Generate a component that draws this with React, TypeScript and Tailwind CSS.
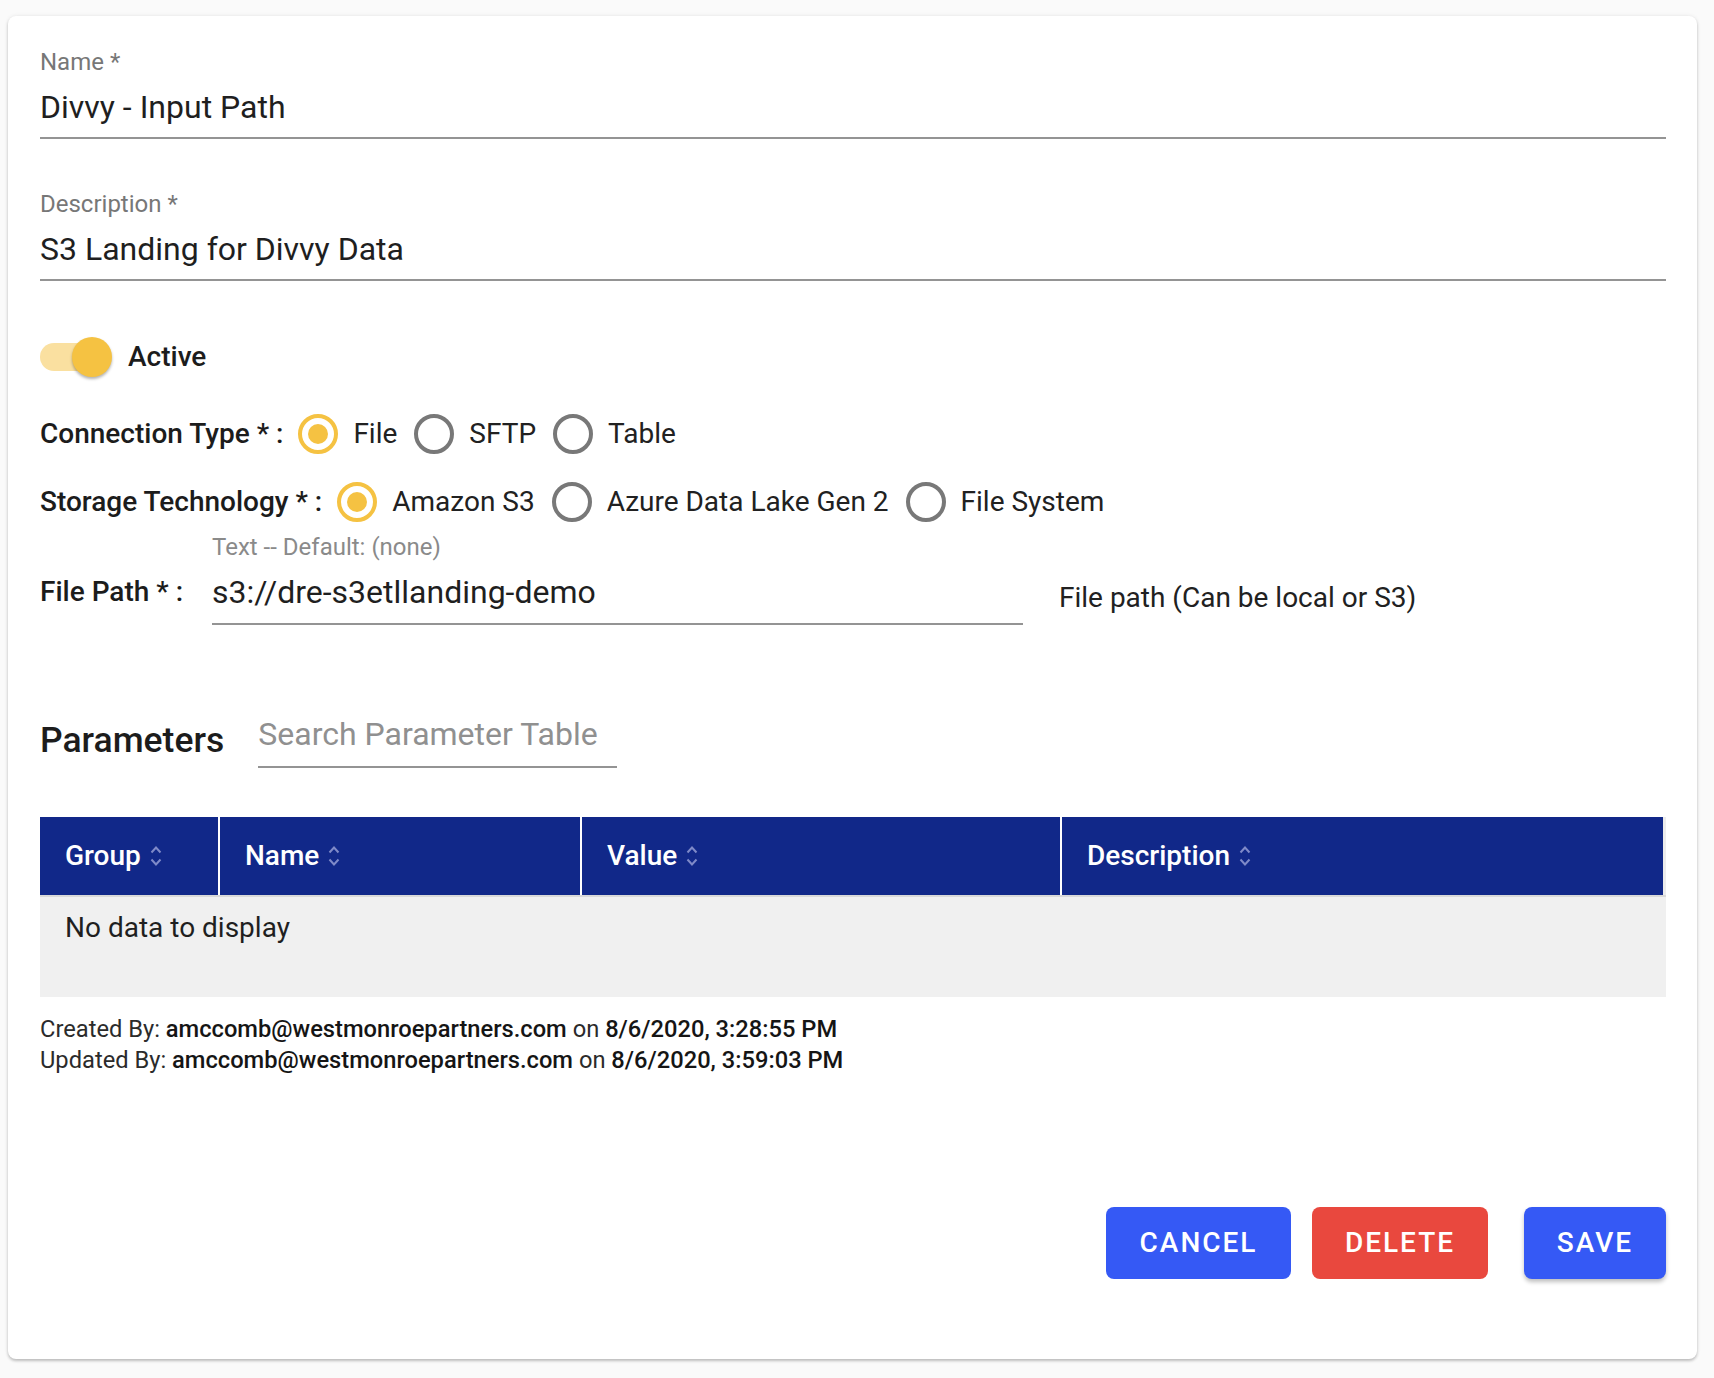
import React from 'react';

const Radio = ({ checked }: { checked?: boolean }) =>
  checked ? (
    <span className="flex h-10 w-10 shrink-0 items-center justify-center rounded-full border-4 border-[#f5c242]">
      <span className="h-5 w-5 rounded-full bg-[#f5c242]" />
    </span>
  ) : (
    <span className="h-10 w-10 shrink-0 rounded-full border-4 border-[#787878]" />
  );

const RadioGroup = ({ label, options, selected }: { label: string; options: string[]; selected: string }) => (
  <div className="flex h-10 items-center">
    <span className="mr-[15px] text-[28px] font-medium leading-[36px] text-[#1c1c1c]">{label}</span>
    <div className="flex items-center gap-[17px]">
      {options.map((o) => (
        <label key={o} className="flex items-center gap-[15px]">
          <Radio checked={o === selected} />
          <span className="text-[28px] leading-[36px] text-[#212121]">{o}</span>
        </label>
      ))}
    </div>
  </div>
);

const SortIcon = () => (
  <svg width="12" height="22" viewBox="0 0 12 22" fill="none" stroke="#7f8ac8" strokeWidth="2">
    <path d="M1.5 7.5 L6 2.5 L10.5 7.5" />
    <path d="M1.5 14.5 L6 19.5 L10.5 14.5" />
  </svg>
);

const columns = [
  { title: 'Group', width: 'w-[180px]' },
  { title: 'Name', width: 'w-[362px]' },
  { title: 'Value', width: 'w-[480px]' },
];

export default function App() {
  return (
    <div className="min-h-screen bg-[#fafafa] pt-4 pl-2 pr-[17px] pb-[21px] font-['Roboto',sans-serif]">
      <div className="rounded-lg bg-white pt-8 pl-8 pr-[31px] pb-[80px] shadow-[0_2px_3px_rgba(0,0,0,0.22),0_0_4px_rgba(0,0,0,0.08)]">
        {/* name */}
        <div>
          <div className="text-[24px] leading-[28px] text-[#777]">Name *</div>
          <div className="mt-[11px] border-b-2 border-[#949494] pb-[10px] text-[32px] leading-[40px] text-[#1f1f1f]">
            Divvy - Input Path
          </div>
        </div>

        {/* description */}
        <div className="mt-[51px]">
          <div className="text-[24px] leading-[28px] text-[#777]">Description *</div>
          <div className="mt-[11px] border-b-2 border-[#949494] pb-[10px] text-[32px] leading-[40px] text-[#1f1f1f]">
            S3 Landing for Divvy Data
          </div>
        </div>

        {/* active switch */}
        <div className="mt-[56px] flex h-10 items-center gap-4">
          <span className="relative h-10 w-[72px] shrink-0">
            <span className="absolute left-0 top-[6px] h-7 w-[68px] rounded-full bg-[#fae0a0]" />
            <span className="absolute right-0 top-0 h-10 w-10 rounded-full bg-[#f5c242] shadow-[0_2px_3px_rgba(0,0,0,0.3)]" />
          </span>
          <span className="text-[28px] font-medium leading-[36px] text-[#1c1c1c]">Active</span>
        </div>

        <div className="mt-[37px]">
          <RadioGroup label="Connection Type * :" options={['File', 'SFTP', 'Table']} selected="File" />
        </div>
        <div className="mt-7">
          <RadioGroup
            label="Storage Technology * :"
            options={['Amazon S3', 'Azure Data Lake Gen 2', 'File System']}
            selected="Amazon S3"
          />
        </div>

        {/* file path */}
        <div className="mt-[11px] flex items-start">
          <div className="w-[172px] shrink-0 pt-[41px] text-[28px] font-medium leading-[36px] text-[#1c1c1c]">
            File Path * :
          </div>
          <div className="w-[811px] shrink-0">
            <div className="text-[24px] leading-[28px] text-[#8a8a8a]">Text -- Default: (none)</div>
            <div className="mt-[11px] border-b-2 border-[#949494] pb-[11px] text-[32px] leading-[40px] text-[#1f1f1f]">
              s3://dre-s3etllanding-demo
            </div>
          </div>
          <div className="ml-9 pt-[47px] text-[28px] leading-[36px] text-[#212121]">File path (Can be local or S3)</div>
        </div>

        {/* parameters */}
        <div className="mt-[89px] flex items-start gap-[34px]">
          <h2 className="mt-1 text-[35.5px] font-medium leading-[44px] text-[#1c1c1c]">Parameters</h2>
          <div className="w-[359px] border-b-2 border-[#949494] pb-3 text-[32px] leading-[40px] text-[#909090]">
            Search Parameter Table
          </div>
        </div>

        <div className="mt-[49px]">
          <div className="flex h-[78px] bg-[#ececec] pr-[3px]">
            {columns.map((c) => (
              <div
                key={c.title}
                className={`${c.width} flex shrink-0 items-center gap-[9px] border-r-2 border-white bg-[#112889] pl-[25px]`}
              >
                <span className="text-[28px] font-medium leading-[36px] text-white">{c.title}</span>
                <SortIcon />
              </div>
            ))}
            <div className="flex flex-1 items-center gap-[9px] bg-[#112889] pl-[25px]">
              <span className="text-[28px] font-medium leading-[36px] text-white">Description</span>
              <SortIcon />
            </div>
          </div>
          <div className="h-[102px] border-t-2 border-[#d9d9d9] bg-[#f0f0f0] pl-[25px] pt-[13px] text-[28px] leading-[36px] text-[#1f1f1f]">
            No data to display
          </div>
        </div>

        <div className="mt-[17px] text-[23.7px] leading-[31px] text-[#2b2b2b]">
          <div>
            Created By: <span className="font-medium text-[#151515]">amccomb@westmonroepartners.com</span> on{' '}
            <span className="font-medium text-[#151515]">8/6/2020, 3:28:55 PM</span>
          </div>
          <div>
            Updated By: <span className="font-medium text-[#151515]">amccomb@westmonroepartners.com</span> on{' '}
            <span className="font-medium text-[#151515]">8/6/2020, 3:59:03 PM</span>
          </div>
        </div>

        <div className="mt-[131px] flex justify-end">
          <button className="h-[72px] w-[185px] rounded-lg bg-[#3559f5] text-[28px] font-medium tracking-[2px] text-white">
            CANCEL
          </button>
          <button className="ml-[21px] h-[72px] w-[176px] rounded-lg bg-[#e9483e] text-[28px] font-medium tracking-[2px] text-white">
            DELETE
          </button>
          <button className="ml-9 h-[72px] w-[142px] rounded-lg bg-[#3559f5] text-[28px] font-medium tracking-[2px] text-white shadow-[0_3px_4px_rgba(0,0,0,0.25)]">
            SAVE
          </button>
        </div>
      </div>
    </div>
  );
}
